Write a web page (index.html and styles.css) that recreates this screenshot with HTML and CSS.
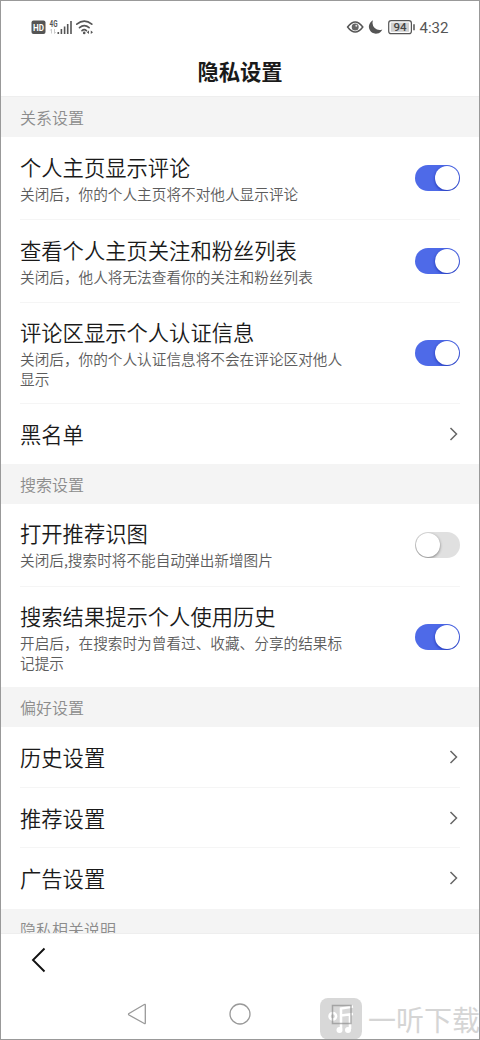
FILE: index.html
```html
<!DOCTYPE html>
<html lang="zh-CN">
<head>
<meta charset="utf-8">
<title>隐私设置</title>
<link rel="stylesheet" href="styles.css">
</head>
<body>
<div class="phone">
  <header class="status">
    <svg class="status-left" width="70" height="20" viewBox="30 17 70 20">
      <rect x="31.5" y="20.5" width="14" height="13.500" rx="2" fill="#555"/>
      <text x="38.5" y="30.6" class="hd" text-anchor="middle" textLength="11" lengthAdjust="spacingAndGlyphs">HD</text>
      <text x="49.5" y="26.800" class="net" textLength="8" lengthAdjust="spacingAndGlyphs">4G</text>
      <path d="M51.5 29v4.500M50.300 30.500l1.200-1.500M54.500 29v4.500l1.200-1.500" stroke="#ccc" stroke-width="1" fill="none"/>
      <path d="M58.300 32v2M61.400 29v5M64.600 26.500v7.500M67.700 24v10M71 21v13" stroke="#555" stroke-width="1.600"/>
      <path d="M76.800 24.200q7.500-6 15 0M79.500 27.700q4.800-4.200 9.600 0M82 30.600q2.200-1.900 4.400 0" stroke="#555" stroke-width="1.700" fill="none" stroke-linecap="round"/>
      <circle cx="84.200" cy="32.900" r="1.300" fill="#555"/>
      <path d="M86.800 32.300l2.200-1.700v3.400zM93 32.300l-2.200-1.700v3.400z" fill="#555"/>
    </svg>
    <svg class="status-right" width="104" height="20" viewBox="346 17 104 20">
      <path d="M347.600 27Q355.200 16.800 362.800 27Q355.200 37.200 347.600 27z" fill="none" stroke="#555" stroke-width="1.500"/>
      <circle cx="355.200" cy="27" r="3.500" fill="#666"/>
      <circle cx="356.300" cy="25.800" r="1" fill="#ddd"/>
      <path d="M373 20.300A7 7 0 1 0 382.300 29.500A7.200 7.200 0 0 1 373 20.300z" fill="#555"/>
      <rect x="388.700" y="20.700" width="22.700" height="13" rx="2.500" fill="#fff" stroke="#555" stroke-width="1.200"/>
      <rect x="390.800" y="22.600" width="18.200" height="9.200" fill="#d0d0d0"/>
      <path d="M414 24.300v6" stroke="#555" stroke-width="1.500"/>
      <text x="400" y="31.300" class="battery" text-anchor="middle">94</text>
      <text x="419.500" y="32.700" class="clock" textLength="29" lengthAdjust="spacingAndGlyphs">4:32</text>
    </svg>
  </header>
  <h1 class="page-title">隐私设置</h1>
  <main class="content">
    <h2 class="section">关系设置</h2>
    <div class="row tall">
      <div class="copy"><div class="label">个人主页显示评论</div><div class="desc">关闭后，你的个人主页将不对他人显示评论</div></div>
      <span class="switch on"></span>
    </div>
    <div class="row tall">
      <div class="copy"><div class="label">查看个人主页关注和粉丝列表</div><div class="desc">关闭后，他人将无法查看你的关注和粉丝列表</div></div>
      <span class="switch on"></span>
    </div>
    <div class="row taller">
      <div class="copy"><div class="label">评论区显示个人认证信息</div><div class="desc">关闭后，你的个人认证信息将不会在评论区对他人<br>显示</div></div>
      <span class="switch on"></span>
    </div>
    <div class="row link"><div class="label">黑名单</div><svg class="chevron" width="10" height="14" viewBox="0 0 10 14"><path d="M1.500 1L7.500 7L1.500 13"/></svg></div>
    <h2 class="section">搜索设置</h2>
    <div class="row tall">
      <div class="copy"><div class="label">打开推荐识图</div><div class="desc">关闭后,搜索时将不能自动弹出新增图片</div></div>
      <span class="switch"></span>
    </div>
    <div class="row taller last">
      <div class="copy"><div class="label">搜索结果提示个人使用历史</div><div class="desc">开启后，在搜索时为曾看过、收藏、分享的结果标<br>记提示</div></div>
      <span class="switch on"></span>
    </div>
    <h2 class="section">偏好设置</h2>
    <div class="row link ruled"><div class="label">历史设置</div><svg class="chevron" width="10" height="14" viewBox="0 0 10 14"><path d="M1.500 1L7.500 7L1.500 13"/></svg></div>
    <div class="row link ruled"><div class="label">推荐设置</div><svg class="chevron" width="10" height="14" viewBox="0 0 10 14"><path d="M1.500 1L7.500 7L1.500 13"/></svg></div>
    <div class="row link"><div class="label">广告设置</div><svg class="chevron" width="10" height="14" viewBox="0 0 10 14"><path d="M1.500 1L7.500 7L1.500 13"/></svg></div>
    <h2 class="section">隐私相关说明</h2>
  </main>
  <footer class="toolbar">
    <svg width="16" height="26" viewBox="0 0 16 26"><path d="M13.500 1.500L2 13L13.500 24.500" fill="none" stroke="#111" stroke-width="1.900"/></svg>
  </footer>
  <nav class="navbar">
    <svg width="20" height="24" viewBox="0 0 20 24"><path d="M17.300 2.500Q18.300 2 18.300 3V21Q18.300 22 17.300 21.500L2 13Q1 12.300 2 11.500z" fill="none" stroke="#999" stroke-width="1.300"/></svg>
    <svg width="24" height="24" viewBox="0 0 24 24"><circle cx="12" cy="12" r="10" fill="none" stroke="#999" stroke-width="1.300"/></svg>
    <svg width="20" height="24" viewBox="0 0 20 24"><rect x="1" y="3" width="18" height="18" rx="1" fill="none" stroke="#999" stroke-width="1.300"/></svg>
  </nav>
  <div class="watermark">
    <svg width="42" height="42" viewBox="320 998 42 42">
      <rect x="320" y="998" width="42" height="41.500" rx="8" fill="#d8d8d8"/>
      <g fill="none" stroke="#fff" stroke-width="2.500">
        <circle cx="332.800" cy="1016.300" r="3.300"/>
        <path d="M341 1029V1008.500L353 1006.500M341 1015.500L353 1014M350 1029V1015"/>
      </g>
      <circle cx="339.500" cy="1030" r="3" fill="#fff"/><circle cx="348" cy="1030" r="3" fill="#fff"/>
      <rect x="332.500" y="1005.500" width="18.500" height="18" fill="none" stroke="#888" stroke-opacity=".65" stroke-width="1.500"/>
    </svg>
    <span class="brand">一听下载</span>
  </div>
</div>
</body>
</html>
```
FILE: styles.css
```css
* { box-sizing: border-box; }
body { margin: 0; }
.phone {
  position: relative;
  display: flex;
  flex-direction: column;
  width: 480px;
  height: 1040px;
  border: 1px solid #999;
  background: #fff;
  color: #1a1a1a;
  overflow: hidden;
  font-family: "Noto Sans CJK SC", sans-serif;
}
.status {
  display: flex;
  justify-content: space-between;
  padding: 16px 29px 0 29px;
  height: 45px;
}
.hd { font: bold 9px Roboto, sans-serif; fill: #fff; }
.net { font: bold 9px Roboto, sans-serif; fill: #555; }
.battery { font: 500 11.5px Roboto, sans-serif; fill: #444; }
.clock { font: 15px Roboto, sans-serif; fill: #555; }
.page-title {
  margin: 0;
  height: 50px;
  line-height: 49px;
  font-size: 21.3px;
  font-weight: 700;
  text-align: center;
}
.content { height: 838px; overflow: hidden; border-bottom: 1px solid #eee; }
.section {
  margin: 0;
  padding-left: 19px;
  height: 40.100px;
  line-height: 40.500px;
  font-size: 16px;
  font-weight: 350;
  color: #8c8c8c;
  background: #f4f4f4;
}
.section:first-child { height: 41px; line-height: 40px; border-top: 1px solid #eee; }
.row {
  display: flex;
  align-items: center;
  justify-content: space-between;
  margin: 0 19px;
  border-bottom: 1px solid #f5f5f5;
}
.tall { height: 83px; }
.taller { height: 100.600px; }
.link { height: 60.200px; border-bottom: 0; }
.ruled { height: 60.600px; border-bottom: 1px solid #f5f5f5; }
.last { height: 100.200px; border-bottom: 0; }
.label {
  font-size: 21.3px;
  line-height: 30px;
  font-weight: 350;
  white-space: nowrap;
}
.copy .label { line-height: 28px; padding-bottom: 3px; }
.desc {
  font-size: 14.650px;
  line-height: 20px;
  font-weight: 350;
  color: #5c5c5c;
  white-space: nowrap;
}
.taller .label { line-height: 29px; }
.switch {
  flex: none;
  width: 45px;
  height: 26px;
  padding: 1px;
  border-radius: 13px;
  overflow: hidden;
  background: #e0e0e0;
}
.switch::after {
  content: "";
  display: block;
  width: 24px;
  height: 24px;
  border-radius: 50%;
  background: #fff;
  box-shadow: 0 1px 3px rgba(0, 0, 0, .45);
}
.on { background: #4e6ae8; padding-left: 20px; }
.on::after { box-shadow: 0 1px 3px rgba(0, 20, 150, .65); }
.chevron { margin-right: 1px; fill: none; stroke: #666; stroke-width: 1.500; }
.toolbar { display: flex; padding: 13px 0 0 30px; height: 54px; }
.navbar {
  display: flex;
  justify-content: space-between;
  padding: 14px 127px 0 126px;
}
.watermark {
  position: absolute;
  left: 319px;
  top: 997px;
  display: flex;
  align-items: center;
  gap: 6px;
}
.brand {
  font-size: 28px;
  line-height: 42px;
  font-weight: 400;
  color: #d5d5d5;
  white-space: nowrap;
}
```
